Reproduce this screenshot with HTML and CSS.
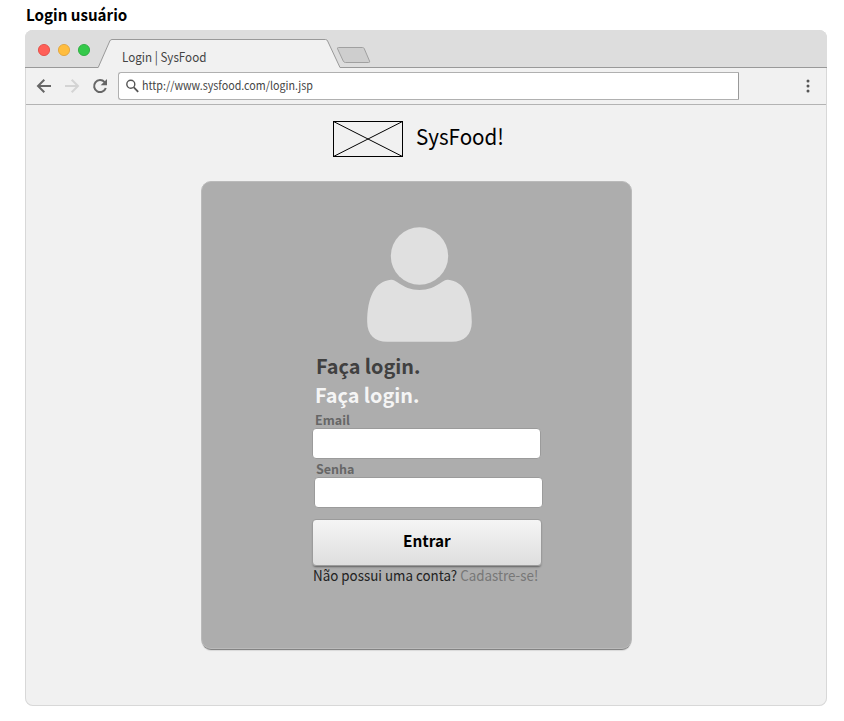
FILE: index.html
```html
<!DOCTYPE html>
<html lang="pt-BR">
<head>
<meta charset="utf-8">
<title>Login | SysFood</title>
<link rel="stylesheet" href="styles.css">
</head>
<body>
<h1 class="caption"><span class="narrow">Login usuário</span></h1>
<div class="window">
  <div class="strip">
    <svg class="strip-art" width="802" height="38" viewBox="25 30 802 38">
      <circle cx="44" cy="50" r="5.6" fill="#ff5f57" stroke="#e0443e" stroke-width=".8"/>
      <circle cx="64" cy="50" r="5.6" fill="#ffbd3e" stroke="#dea034" stroke-width=".8"/>
      <circle cx="84" cy="50" r="5.6" fill="#34c94a" stroke="#24a738" stroke-width=".8"/>
      <path d="M25 69V67.5H98.200L109.800 41Q110.400 39.500 112 39.500H325.500Q327 39.500 327.600 41L340 67.500H828V69" fill="#f1f1f1" stroke="#999" stroke-width="1"/>
      <path d="M338.500 47.500H362.500Q363.700 47.500 364.200 48.500L369.600 61.200Q370 62.500 368.500 62.500H345.500Q344 62.500 343.300 61.200L337.600 48.900Q337 47.500 338.500 47.500Z" fill="#cecece" stroke="#a0a0a0"/>
    </svg>
    <span class="tab-title narrow">Login | SysFood</span>
  </div>
  <div class="toolbar">
    <svg class="nav" width="93" height="36" viewBox="25 68 93 36" fill="none" stroke-width="2">
      <path d="M51 86H38.500M44.300 79.700L38 86L44.300 92.300" stroke="#666"/>
      <path d="M65 86H77.500M71.700 79.700L78 86L71.700 92.300" stroke="#d4d4d4"/>
      <path d="M104.600 82.100A6 6 0 1 0 105.800 88" stroke="#666"/>
      <path d="M107 79V85.300H100.700Z" fill="#666"/>
    </svg>
    <div class="address">
      <svg width="14" height="14" viewBox="0 0 14 14" fill="none" stroke="#555"><circle cx="4.800" cy="5.300" r="4" stroke-width="1.400"/><path d="M7.800 8.300L12.200 12.800" stroke-width="1.800"/></svg>
      <span class="url narrow">http://www.sysfood.com/login.jsp</span>
    </div>
    <svg class="more" width="6" height="16" viewBox="0 0 6 16" fill="#555"><circle cx="3" cy="3" r="1.500"/><circle cx="3" cy="8" r="1.500"/><circle cx="3" cy="13" r="1.500"/></svg>
  </div>
  <main class="page">
    <header class="brand">
      <svg width="70" height="36" viewBox="0 0 70 36" fill="none" stroke="#000"><rect x=".5" y=".5" width="69" height="35"/><path d="M.5 .5L69.500 35.500M.5 35.500L69.500 .5"/></svg>
      <span class="brand-name narrow">SysFood!</span>
    </header>
    <section class="card">
      <svg class="avatar" width="106" height="116" viewBox="366 226 106 116" fill="#e0e0e0">
        <circle cx="419.500" cy="256" r="28.700"/>
        <path d="M391 279.700C393.500 279.500 395 280.500 397 282C404 287 411 290 419.500 290C428 290 435 287 442 282C444 280.500 445.500 279.500 448 279.700C464 281 471.800 297 471.800 322C471.800 335 464 341.700 452 341.700H387C375 341.700 367.200 335 367.200 322C367.200 297 375 281 391 279.700Z"/>
      </svg>
      <h2 class="heading dark narrow">Faça login.</h2>
      <h2 class="heading light narrow">Faça login.</h2>
      <label class="label email-label" for="email">Email</label>
      <input class="field" id="email" type="email">
      <label class="label senha-label" for="senha">Senha</label>
      <input class="field senha" id="senha" type="password">
      <button class="submit"><span class="submit-text narrow">Entrar</span></button>
      <p class="signup narrow">Não possui uma conta? <a class="join">Cadastre-se!</a></p>
    </section>
  </main>
</div>
</body>
</html>
```
FILE: styles.css
```css
* { box-sizing: border-box; }
body {
  margin: 0;
  height: 721px;
  overflow: hidden;
  background: #fff;
  font-family: "Noto Sans CJK SC", "Noto Sans", sans-serif;
}
/* Slightly condensed lettering; --fit is the horizontal ratio. */
.narrow { display: inline-block; transform: scaleX(var(--fit)); transform-origin: 0 0; white-space: nowrap; }
.caption { --fit: .947; height: 30px; margin: 0; padding-left: 26px; font-size: 16px; line-height: 29px; font-weight: 700; }
.window {
  width: 802px;
  height: 676px;
  margin-left: 25px;
  border-radius: 8px;
  background: #f1f1f1;
  overflow: hidden;
  box-shadow: inset 0 0 0 1px #d8d8d8;
}
.strip { display: grid; height: 38px; background: #ddd; }
.strip-art, .tab-title { grid-area: 1 / 1; }
.tab-title { --fit: .895; justify-self: start; margin: 13px 0 0 97px; font-size: 13px; line-height: 28px; color: #444; z-index: 1; }
.toolbar { display: flex; align-items: center; height: 37px; margin: 0 1px; border-bottom: 1px solid #b3b3b3; }
.nav { margin-left: -1px; }
.address {
  display: flex;
  align-items: center;
  width: 621px;
  height: 28px;
  padding-left: 7px;
  border: 1px solid #b0b0b0;
  border-right-color: #999;
  border-radius: 3px 0 0 3px;
  background: #fff;
}
.url { --fit: .932; margin: 0 0 2px 2px; font-size: 11.500px; line-height: 26px; color: #444; }
.more { margin-left: 66px; }
.page { padding-top: 16px; }
.brand { display: flex; height: 36px; margin-left: 308px; }
.brand-name { --fit: .935; margin-left: 13px; font-size: 22px; line-height: 29px; }
.card {
  display: flex;
  flex-direction: column;
  align-items: flex-start;
  width: 431px;
  height: 468px;
  margin: 24px 0 0 176px;
  padding: 45px 0 0 111px;
  border: 1px solid #bababa;
  border-radius: 10px;
  background: #adadad;
  box-shadow: 0 2px 1px -1px rgba(0, 0, 0, .4), 0 3px 2px -2px rgba(0, 0, 0, .2);
}
.avatar { flex: none; margin: -1px 0 10px 53px; }
.heading { --fit: .99; flex: none; margin: 0; height: 29px; font-size: 20px; line-height: 27px; font-weight: 700; }
.dark { margin-left: 3px; color: #404040; }
.light { margin-left: 2px; color: #f5f5f5; }
.label { height: 18px; font-size: 12.500px; line-height: 20px; font-weight: 700; color: #666; }
.email-label { margin-left: 2px; }
.senha-label { margin-left: 3px; }
.field { width: 229px; height: 31px; margin: 0 0 0 -1px; padding: 0 8px; border: 1px solid #9b9b9b; border-radius: 4px; background: #fff; }
.senha { margin-left: 1px; }
.submit {
  width: 230px;
  height: 47px;
  margin: 11px 0 0 -1px;
  padding: 0 0 4px;
  border: 1px solid #9b9b9b;
  border-radius: 4px;
  background: linear-gradient(#f5f5f5, #dedede);
  box-shadow: 0 2px 2px -1px rgba(0, 0, 0, .45);
  font: 700 16px/38px "Noto Sans CJK SC", sans-serif;
  color: #000;
}
.submit-text { --fit: .96; position: relative; top: -1px; transform-origin: 50% 0; }
.signup { --fit: .922; margin: 0; font-size: 14.500px; line-height: 17px; color: #222; }
.join { color: #777; }
```
